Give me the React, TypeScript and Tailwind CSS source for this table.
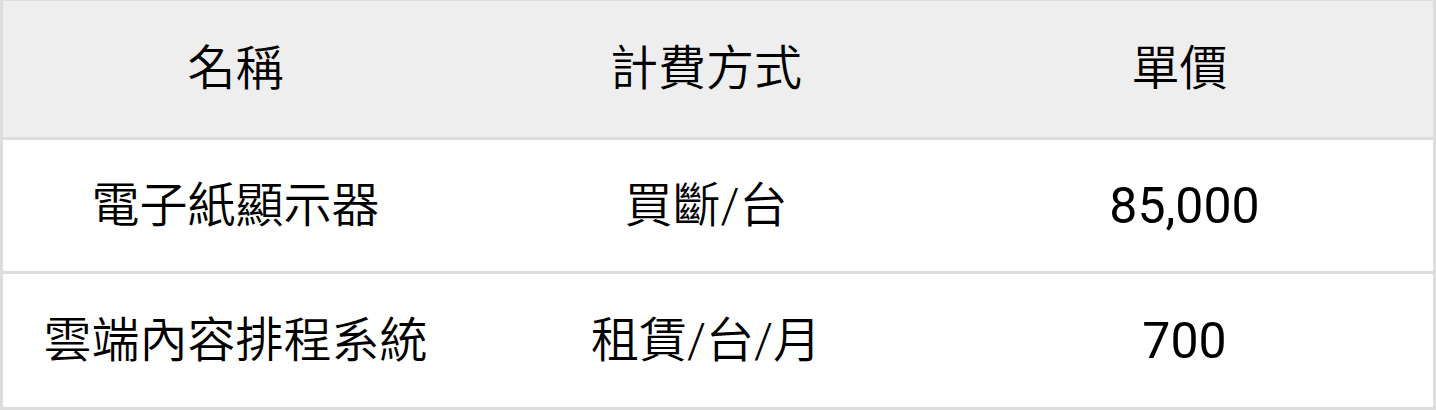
const rows = [
  { name: '電子紙顯示器', billing: '買斷/台', price: '85,000', h: 'h-[134px]' },
  { name: '雲端內容排程系統', billing: '租賃/台/月', price: '700', h: 'h-[136px]' },
];

export default function App() {
  return (
    <div
      className="w-[1436px] h-[410px] bg-white text-black text-[48px] leading-none font-[350]"
      style={{ fontFamily: 'Roboto, "Noto Sans CJK TC", sans-serif' }}
    >
      <div className="border-x-[3px] border-b-[3px] border-t border-[#dddddd]">
        {/* header */}
        <div className="grid grid-cols-[465px_476px_1fr] h-[136px] items-center bg-[#eeeeee]">
          <div className="text-center">名稱</div>
          <div className="text-center">計費方式</div>
          <div className="text-center pr-[18px]">單價</div>
        </div>

        {rows.map((r) => (
          <div
            key={r.name}
            className={`grid grid-cols-[465px_476px_1fr] items-center border-t-[3px] border-[#dddddd] ${r.h}`}
          >
            <div className="text-center">{r.name}</div>
            <div className="text-center">{r.billing}</div>
            <div className="text-center pr-[8px] font-normal text-[50px]">{r.price}</div>
          </div>
        ))}
      </div>
    </div>
  );
}
